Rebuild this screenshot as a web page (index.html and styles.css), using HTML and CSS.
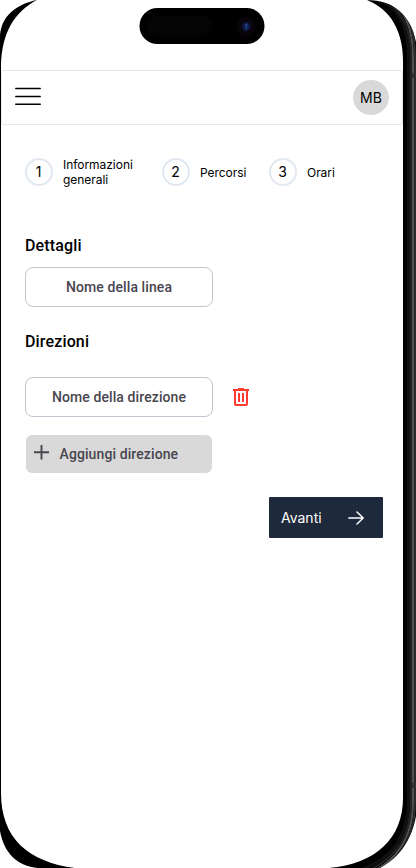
FILE: index.html
```html
<!DOCTYPE html>
<html lang="it">
<head>
<meta charset="utf-8">
<title>Nuova linea</title>
<link rel="stylesheet" href="styles.css">
</head>
<body>
<div class="screen">
  <header class="topbar">
    <svg class="menu" width="26" height="19" viewBox="0 0 26 19" fill="none" stroke="#000" stroke-width="1.5" stroke-linecap="round"><path d="M.8 1.5H25.2M.8 9.5H25.2M.8 17.3H25.2"/></svg>
    <div class="avatar">MB</div>
  </header>
  <main>
    <ol class="steps">
      <li class="step first"><span class="num">1</span><span>Informazioni<br>generali</span></li>
      <li class="step second"><span class="num">2</span><span>Percorsi</span></li>
      <li class="step"><span class="num">3</span><span>Orari</span></li>
    </ol>
    <h2>Dettagli</h2>
    <div class="field">Nome della linea</div>
    <h2 class="directions">Direzioni</h2>
    <div class="row">
      <div class="field">Nome della direzione</div>
      <svg class="trash" width="16" height="18" viewBox="0 0 16 18" fill="none" stroke="#ff3b30" stroke-width="2"><path d="M0 2H16M5 1H11M2 2V16Q2 17 3 17H13Q14 17 14 16V2M6 5V14M10 5V14"/></svg>
    </div>
    <button class="add"><svg width="15" height="15" viewBox="0 0 15 15" stroke="#49454f" stroke-width="1.9"><path d="M0 7.200H15M7.500 0V14.500"/></svg><span>Aggiungi direzione</span></button>
    <button class="next"><span>Avanti</span><svg width="16" height="14" viewBox="0 0 16 14" fill="none" stroke="#fff" stroke-width="1.5" stroke-linecap="round" stroke-linejoin="round"><path d="M.8 7H15M9 1L15.2 7L9 13"/></svg></button>
  </main>
</div>
<svg class="bezel" width="416" height="868" viewBox="0 0 416 868">
  <defs>
    <radialGradient id="lens"><stop offset="0" stop-color="#1d3880"/><stop offset=".35" stop-color="#10205c"/><stop offset=".8" stop-color="#0b0b28"/><stop offset="1" stop-color="#08060c"/></radialGradient>
    <clipPath id="shell"><path d="M367 0C394 0 411 16 416 42V816C412 839 399 858 380 868H329C376 864 403 838 403 798V62C403 31 391 10 367 0Z"/></clipPath>
  </defs>
  <path d="M37 0C17 4 0 16 0 38V831C4 853 17 866 38 868H75C28 862 1 838 1 793V65C2 33 14 12 37 0Z"/>
  <g clip-path="url(#shell)" fill="none">
    <path d="M320 0H416V868H320Z" fill="#000"/>
    <path d="M367 -4C396 0 408.500 24 408.500 57V802C408 838 390 861 357 871" stroke="#101010" stroke-width="3"/>
    <path d="M367 -5C398 -1 411 24 411 57V802C411 838 393 862 360 874" stroke="#222" stroke-width="2"/>
    <path d="M367 -7C401 -3 413 23 413 57V802C413 840 394 865 362 876" stroke="#505050" stroke-width="2"/>
    <path d="M368 -9C404 -4 415 22 415 57V802C415 841 396 867 364 879" stroke="#292929" stroke-width="2"/>
    <path d="M412 73H416V78H412ZM412 783H416V788H412Z" fill="#303030"/>
  </g>
  <rect x="139.500" y="8" width="125" height="36" rx="18"/>
  <rect x="147" y="15.500" width="65" height="21" rx="10.500" fill="#040404"/>
  <circle cx="246" cy="26.500" r="10" fill="#08040a"/>
  <circle cx="246.300" cy="26.500" r="5.500" fill="url(#lens)"/>
  <circle cx="246.300" cy="24.500" r="1" fill="#3c5592"/><circle cx="246.300" cy="28.800" r="1" fill="#125168"/>
</svg>
</body>
</html>
```
FILE: styles.css
```css
* { box-sizing: border-box; }
body { margin: 0; background: #fff; color: #000; font-family: Inter, sans-serif; overflow: hidden; }
.screen { width: 402px; height: 868px; margin-left: 1px; padding-top: 70px; }
.topbar { height: 55px; border: 1px solid #e2e8f0; border-radius: 2px; display: flex; align-items: center; justify-content: space-between; padding: 0 13px; }
.menu { margin-bottom: 2px; }
.avatar { width: 36px; height: 35px; border-radius: 50%; background: #d9d9d9; font-size: 14px; line-height: 36px; text-align: center; }
main { padding: 32px 20px 0 24px; display: flex; flex-direction: column; align-items: flex-start; }
.steps { display: flex; height: 30px; margin: 0; padding: 0; list-style: none; }
.step { display: flex; align-items: center; gap: 10px; font-size: 12px; line-height: 15px; letter-spacing: -.04px; }
.step.first { width: 137px; }
.step.second { width: 107px; }
.num { width: 28px; height: 28px; border: 2px solid #e2e8f0; border-radius: 50%; padding-right: 1px; font-size: 14px; line-height: 24px; text-align: center; }
h2 { margin: 47px 0 9px; font: 500 16px/24px Roboto, sans-serif; letter-spacing: .15px; }
.field { width: 188px; height: 40px; border: 1px solid #c4c3d0; border-radius: 8px; color: #49454f; font: 500 14px/38px Roboto, sans-serif; letter-spacing: .1px; text-align: center; }
h2.directions { margin: 23px 0; }
.row { display: flex; align-items: center; gap: 20px; }
button { border: 0; display: flex; align-items: center; text-align: left; }
.add { width: 186px; height: 38px; margin: 18px 0 0 1px; padding: 0 8px; gap: 10.500px; background: #d9d9d9; border-radius: 6px; color: #49454f; font: 500 14px/20px Roboto, sans-serif; letter-spacing: .1px; }
.add svg { margin-bottom: 4px; }
.next { width: 114px; height: 41px; margin-top: 24px; align-self: flex-end; padding: 1px 19px 0 12px; justify-content: space-between; background: #1e293b; border-radius: 1px; color: #fff; font: 400 14px/20px Inter, sans-serif; }
.bezel { position: absolute; left: 0; top: 0; pointer-events: none; }
```
